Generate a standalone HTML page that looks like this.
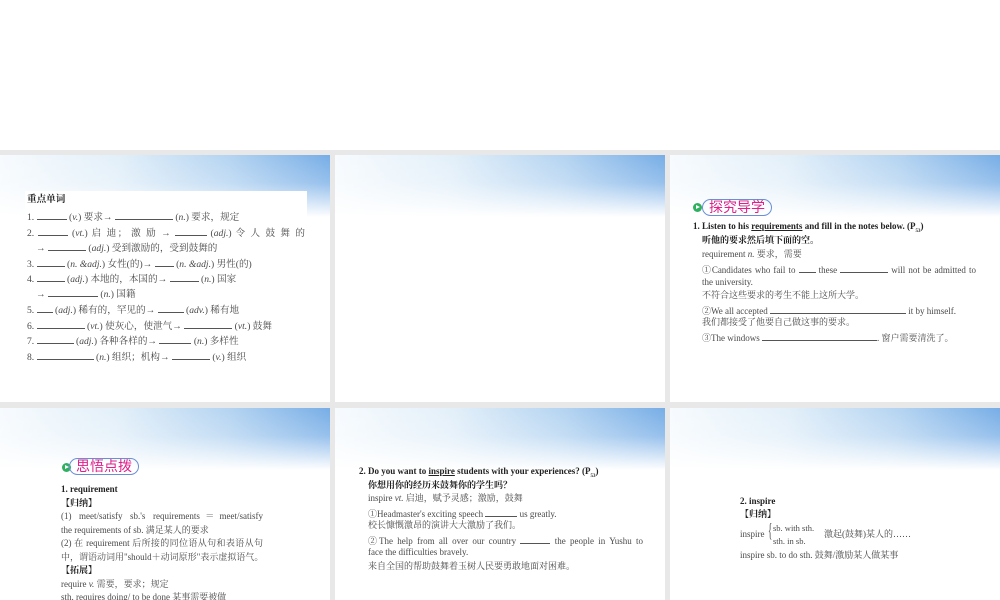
<!DOCTYPE html>
<html><head><meta charset="utf-8"><style>
*{margin:0;padding:0;box-sizing:border-box}
body{width:1000px;height:600px;overflow:hidden;background:#fff;position:relative;font-family:"Liberation Serif","Noto Serif CJK SC",serif;color:#4a4a4a}
.band{position:absolute;left:0;top:150px;width:1000px;height:450px;background:#e8e8e8}
.s{position:absolute;background:#fff;overflow:hidden;font-size:9px}
.s .hd{position:absolute;left:0;top:0;width:100%;height:62px;
background:linear-gradient(to bottom,rgba(255,255,255,0) 0%,rgba(255,255,255,.25) 45%,#fff 100%),linear-gradient(100deg,#f7fbfe 0%,#e2eff9 35%,#b3d3f1 68%,#70a9e5 100%)}
.t{position:absolute;white-space:nowrap;line-height:1}
.j{text-align:justify;text-align-last:justify}
.b{font-weight:bold;color:#222}
.u{display:inline-block;border-bottom:1px solid #555;height:9px;vertical-align:baseline}
sub{line-height:0}
.badge{position:absolute;height:17px;border:1.5px solid #6b8fd6;border-radius:9px;color:#e0208a;font-family:"Liberation Sans","Noto Sans CJK SC",sans-serif;font-size:14px;line-height:14px;padding:0 6px}
.dot{position:absolute;width:9px;height:9px;border-radius:50%;background:#2fb060}
.dot:after{content:"";position:absolute;left:3px;top:2px;border-left:4px solid #fff;border-top:2.5px solid transparent;border-bottom:2.5px solid transparent}
</style></head><body>
<div class="band"></div>

<!-- slide 1 -->
<div class="s" style="left:0;top:155px;width:330px;height:247px;font-size:9.6px"><div class="hd"></div>
<div style="position:absolute;left:25px;top:36px;width:282px;height:200px;background:#fff"></div>
<div class="t b" style="left:27px;top:40px">重点单词</div>
<div class="t" style="left:27px;top:56px">1. <span class="u" style="width:30px"></span> (<i>v.</i>) 要求→ <span class="u" style="width:58px"></span> (<i>n.</i>) 要求，规定</div>
<div class="t j" style="left:27px;top:72px;width:278px">2. <span class="u" style="width:30px"></span> (<i>vt.</i>) 启 迪； 激 励 → <span class="u" style="width:32px"></span> (<i>adj.</i>) 令 人 鼓 舞 的</div>
<div class="t" style="left:36px;top:87px">→ <span class="u" style="width:38px"></span> (<i>adj.</i>) 受到激励的，受到鼓舞的</div>
<div class="t" style="left:27px;top:103px">3. <span class="u" style="width:28px"></span> (<i>n. &amp;adj.</i>) 女性(的)→ <span class="u" style="width:19px"></span> (<i>n. &amp;adj.</i>) 男性(的)</div>
<div class="t" style="left:27px;top:118px">4. <span class="u" style="width:28px"></span> (<i>adj.</i>) 本地的，本国的→ <span class="u" style="width:29px"></span> (<i>n.</i>) 国家</div>
<div class="t" style="left:36px;top:133px">→ <span class="u" style="width:50px"></span> (<i>n.</i>) 国籍</div>
<div class="t" style="left:27px;top:149px">5. <span class="u" style="width:16px"></span> (<i>adj.</i>) 稀有的，罕见的→ <span class="u" style="width:26px"></span> (<i>adv.</i>) 稀有地</div>
<div class="t" style="left:27px;top:165px">6. <span class="u" style="width:48px"></span> (<i>vt.</i>) 使灰心，使泄气→ <span class="u" style="width:48px"></span> (<i>vt.</i>) 鼓舞</div>
<div class="t" style="left:27px;top:180px">7. <span class="u" style="width:37px"></span> (<i>adj.</i>) 各种各样的→ <span class="u" style="width:32px"></span> (<i>n.</i>) 多样性</div>
<div class="t" style="left:27px;top:196px">8. <span class="u" style="width:57px"></span> (<i>n.</i>) 组织；机构→ <span class="u" style="width:38px"></span> (<i>v.</i>) 组织</div>
</div>

<!-- slide 2 -->
<div class="s" style="left:335px;top:155px;width:330px;height:247px"><div class="hd"></div></div>

<!-- slide 3 -->
<div class="s" style="left:670px;top:155px;width:330px;height:247px"><div class="hd"></div>
<div class="dot" style="left:23px;top:48px"></div>
<div class="badge" style="left:32px;top:44px">探究导学</div>
<div class="t b" style="left:23px;top:67px">1. Listen to his <u>requirements</u> and fill in the notes below. (P<sub style="font-size:5px">53</sub>)</div>
<div class="t b" style="left:32px;top:81px">听他的要求然后填下面的空。</div>
<div class="t" style="left:32px;top:95px">requirement <i>n.</i> 要求，需要</div>
<div class="t j" style="left:32px;top:109px;width:274px">①Candidates who fail to <span class="u" style="width:17px"></span> these <span class="u" style="width:48px"></span> will not be admitted to</div>
<div class="t" style="left:32px;top:123px">the university.</div>
<div class="t" style="left:32px;top:136px">不符合这些要求的考生不能上这所大学。</div>
<div class="t" style="left:32px;top:150px">②We all accepted <span class="u" style="width:136px"></span> it by himself.</div>
<div class="t" style="left:32px;top:163px">我们都接受了他要自己做这事的要求。</div>
<div class="t" style="left:32px;top:177px">③The windows <span class="u" style="width:115px"></span>. 窗户需要清洗了。</div>
</div>

<!-- slide 4 -->
<div class="s" style="left:0;top:408px;width:330px;height:192px"><div class="hd"></div>
<div class="dot" style="left:62px;top:55px"></div>
<div class="badge" style="left:69px;top:50px;width:70px">思悟点拨</div>
<div class="t b" style="left:61px;top:77px">1. requirement</div>
<div class="t b" style="left:61px;top:91px">【归纳】</div>
<div class="t j" style="left:61px;top:104px;width:202px">(1) meet/satisfy sb.'s requirements＝meet/satisfy</div>
<div class="t" style="left:61px;top:118px">the requirements of sb. 满足某人的要求</div>
<div class="t j" style="left:61px;top:131px;width:202px">(2) 在 requirement 后所接的同位语从句和表语从句</div>
<div class="t" style="left:61px;top:145px">中，谓语动词用"should＋动词原形"表示虚拟语气。</div>
<div class="t b" style="left:61px;top:158px">【拓展】</div>
<div class="t" style="left:61px;top:172px">require <i>v.</i> 需要，要求；规定</div>
<div class="t" style="left:61px;top:185px">sth. requires doing/ to be done 某事需要被做</div>
</div>

<!-- slide 5 -->
<div class="s" style="left:335px;top:408px;width:330px;height:192px"><div class="hd"></div>
<div class="t b" style="left:24px;top:59px">2. Do you want to <u>inspire</u> students with your experiences? (P<sub style="font-size:5px">53</sub>)</div>
<div class="t b" style="left:33px;top:73px">你想用你的经历来鼓舞你的学生吗？</div>
<div class="t" style="left:33px;top:86px">inspire <i>vt.</i> 启迪，赋予灵感；激励，鼓舞</div>
<div class="t" style="left:33px;top:100px">①Headmaster's exciting speech <span class="u" style="width:32px"></span> us greatly.</div>
<div class="t" style="left:33px;top:113px">校长慷慨激昂的演讲大大激励了我们。</div>
<div class="t j" style="left:33px;top:127px;width:275px">②The help from all over our country <span class="u" style="width:30px"></span> the people in Yushu to</div>
<div class="t" style="left:33px;top:140px">face the difficulties bravely.</div>
<div class="t" style="left:33px;top:154px">来自全国的帮助鼓舞着玉树人民要勇敢地面对困难。</div>
</div>

<!-- slide 6 -->
<div class="s" style="left:670px;top:408px;width:330px;height:192px"><div class="hd"></div>
<div class="t b" style="left:70px;top:89px">2. inspire</div>
<div class="t b" style="left:70px;top:102px">【归纳】</div>
<div class="t" style="left:70px;top:122px">inspire</div>
<div class="t" style="left:98px;top:113px;font-size:20px;line-height:1;transform:scaleX(.45);transform-origin:left">{</div>
<div class="t" style="left:103px;top:116px;font-size:8.5px">sb.  with sth.</div>
<div class="t" style="left:103px;top:129px;font-size:8.5px">sth.  in sb.</div>
<div class="t" style="left:154px;top:122px">激起(鼓舞)某人的……</div>
<div class="t" style="left:70px;top:143px">inspire sb.  to do sth.  鼓舞/激励某人做某事</div>
</div>
</body></html>
